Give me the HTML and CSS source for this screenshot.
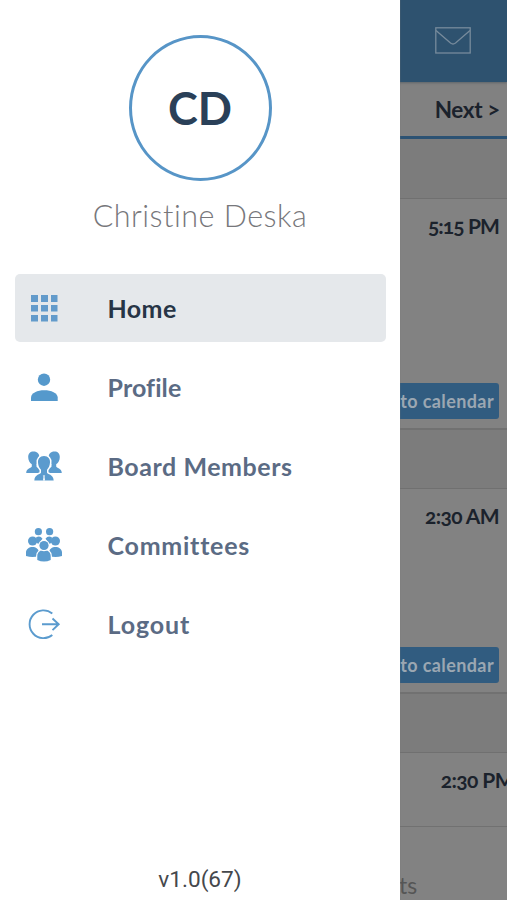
FILE: index.html
```html
<!DOCTYPE html>
<html lang="en">
<head>
<meta charset="utf-8">
<title>Home</title>
<link rel="stylesheet" href="styles.css">
</head>
<body>
<main class="app">
  <header class="topbar">
    <svg class="mail" viewBox="0 0 36 27" fill="none" stroke="#778b9c" stroke-width="1.3"><rect x=".8" y=".8" width="34.4" height="25.2"/><path d="M1 3.500 15.500 16q2.500 2 5 0L35 3.500"/></svg>
  </header>
  <div class="pager"><span class="next">Next &gt;</span></div>
  <div class="gap gap-first"></div>
  <section class="card card-a"><time class="time t1">5:15 PM</time><span class="add"><span class="add-label">to calendar</span></span></section>
  <div class="gap"></div>
  <section class="card card-b"><time class="time t2">2:30 AM</time><span class="add"><span class="add-label">to calendar</span></span></section>
  <div class="gap"></div>
  <section class="card card-c"><time class="time t3">2:30 PM</time></section>
  <footer class="tabs"><span>ts</span></footer>
</main>
<aside class="drawer">
  <div class="avatar"><span>CD</span></div>
  <div class="name"><span>Christine Deska</span></div>
  <nav class="menu">
    <a class="item active">
      <svg class="icon" viewBox="0 0 40 40" fill="#639bcb"><path d="M7 7h7v7H7zM17 7h7v7h-7zM27 7h6.500v7H27zM7 17h7v6.500H7zM17 17h7v6.500h-7zM27 17h6.500v6.500H27zM7 27h7v6.500H7zM17 27h7v6.500h-7zM27 27h6.500v6.500H27z"/></svg>
      <span class="l-home">Home</span></a>
    <a class="item">
      <svg class="icon" viewBox="0 0 40 40" fill="#5599cc"><circle cx="20" cy="12.700" r="6.200"/><path d="M7 34v-3.500c0-4.600 6.500-7.300 13.300-7.300s13.400 2.700 13.400 7.300V34z"/></svg>
      <span class="l-profile">Profile</span></a>
    <a class="item">
      <svg class="icon" viewBox="0 0 40 40" fill="#5b9bce"><path d="M9.500 5.500c4 0 6 2.500 5.800 6-.2 3-1.300 5-2.800 6.500v2.500c0 1.500 5.500 1.800 6 6.500H2.200c.2-5 5.300-5 5.600-6.500v-2.200C5.500 17 4.200 14 4.200 11c0-3.500 2-5.500 5.300-5.500z"/><path d="M30.500 5.500c-4 0-6 2.500-5.800 6 .2 3 1.300 5 2.800 6.500v2.500c0 1.500-5.500 1.800-6 6.500h16.300c-.2-5-5.300-5-5.600-6.500v-2.200c2.300-1.300 3.600-4.300 3.600-7.300 0-3.500-2-5.500-5.300-5.500z"/><path stroke="#fff" stroke-width="3" paint-order="stroke" d="M20 10c4.300 0 6.300 3 6 6.500-.2 3.200-1.400 5.600-3 7.200v2.800c.4 2 6.300 1.500 6.700 8H10.300c.4-6.500 6.300-6 6.700-8v-2.800c-1.700-1.600-2.800-4-3-7.200-.2-3.500 1.800-6.500 6-6.500z"/><path fill="#fff" d="m18.800 29 1.200.8 1.200-.8-.7 1.700.5 3.800h-2l.5-3.800z"/></svg>
      <span class="l-board">Board Members</span></a>
    <a class="item">
      <svg class="icon" viewBox="0 0 40 40" fill="#5b9bce"><circle cx="14.400" cy="6.700" r="3.600"/><circle cx="25.600" cy="6.700" r="3.600"/><path d="M12 12.500q4-2.400 6.500 1.200l-2 2.500 3 1-2 3.500-5-3zM28 12.500q-4-2.400-6.500 1.200l2 2.500-3 1 2 3.500 5-3z"/><circle cx="8.600" cy="16" r="4.600"/><circle cx="31.400" cy="16" r="4.600"/><path d="M2 31v-3.500c0-7.500 13-7.500 13 0V31q-6.500 2-13 0zM25 31v-3.500c0-7.500 13-7.500 13 0V31q-6.500 2-13 0z"/><g stroke="#fff" stroke-width="2.400" paint-order="stroke"><path d="M13.300 35v-4c0-8 13.400-8 13.400 0v4q-6.700 3-13.400 0z"/><circle cx="20" cy="20.500" r="4.600"/></g></svg>
      <span class="l-comm">Committees</span></a>
    <a class="item">
      <svg class="icon" viewBox="0 0 40 40" fill="none" stroke="#5b9bce" stroke-width="1.900"><path d="M28.300 9.500A13.900 13.900 0 1 0 28.300 31M18 20.300h16.500M28.500 14.500l6.200 5.800-6.200 5.800"/></svg>
      <span class="l-logout">Logout</span></a>
  </nav>
  <div class="version"><span>v1.0(67)</span></div>
</aside>
</body>
</html>
```
FILE: styles.css
```css
* { box-sizing: border-box; }
body { margin: 0; width: 507px; height: 900px; overflow: hidden; position: relative; background: #828282; font-family: Lato, "Liberation Sans", sans-serif; font-variant-ligatures: none; }
.app { height: 900px; display: flex; flex-direction: column; overflow: hidden; color: #1b222c; }
.topbar { height: 82px; flex: none; background: #2e526f; display: flex; justify-content: flex-end; padding: 27px 36px 0 0; box-shadow: 0 1px 2px #5f656a; position: relative; }
.mail { width: 36px; height: 27px; }
.pager { height: 57px; flex: none; background: #818181; border-bottom: 3px solid #2c5273; display: flex; justify-content: flex-end; align-items: center; padding-right: 7px; }
.next { font-size: 22.500px; font-weight: 700; letter-spacing: -.35px; }
.gap { height: 61px; flex: none; background: #7c7c7c; border-top: 2px solid #717171; border-bottom: 1px solid #707070; }
.gap-first { height: 60px; border-top: 0; }
.card { flex: none; background: #828282; display: flex; flex-direction: column; justify-content: space-between; align-items: flex-end; padding: 13px 8px 9px 0; }
.card-a { height: 229px; }
.card-b { height: 203px; }
.card-c { height: 74px; padding-right: 0; border-bottom: 1px solid #717171; }
.time { font-size: 21px; line-height: 28px; font-weight: 700; font-variant-numeric: oldstyle-nums; white-space: nowrap; }
.t1 { letter-spacing: -.9px; }
.t2 { letter-spacing: -.6px; }
.t3 { letter-spacing: -.6px; margin-right: -7px; }
.add { width: 130px; height: 36px; border-radius: 3px; background: #315c80; color: #9ba7b2; display: flex; align-items: center; justify-content: flex-end; padding-right: 5px; font-size: 18px; font-weight: 700; letter-spacing: .4px; }
.tabs { flex: 1; padding: 43px 0 0 399px; font-size: 23px; line-height: 30px; color: #555; }
.drawer { position: absolute; left: 0; top: 0; width: 400px; height: 900px; background: #fff; display: flex; flex-direction: column; align-items: center; box-shadow: 0 0 1px #777; }
.avatar { flex: none; width: 143px; height: 146px; margin-top: 35px; border: 3px solid #5795c7; border-radius: 50%; display: flex; align-items: center; justify-content: center; font-size: 45px; font-weight: 700; color: #2a4058; padding-bottom: 1px; }
.name { height: 40px; margin-top: 14px; line-height: 40px; font-size: 30.500px; font-weight: 300; letter-spacing: .5px; color: #77777b; white-space: nowrap; }
.menu { margin: 39px 0 0 1px; width: 371px; display: flex; flex-direction: column; gap: 11px; }
.item { height: 68px; display: flex; align-items: center; border-radius: 5px; padding-left: 9px; gap: 43.500px; font-size: 25px; line-height: 30px; font-weight: 700; color: #5b6b84; white-space: nowrap; }
.item span { padding-bottom: 1px; }
.active { background: #e5e8eb; color: #273546; }
.l-home { letter-spacing: .4px; }
.l-profile { letter-spacing: .1px; }
.l-board { letter-spacing: .55px; }
.l-comm { letter-spacing: .75px; }
.l-logout { letter-spacing: .9px; }
.icon { width: 40px; height: 40px; flex: none; }
.version { margin-top: auto; height: 40px; font: 22.600px/40px Roboto, sans-serif; color: #45484c; }
```
